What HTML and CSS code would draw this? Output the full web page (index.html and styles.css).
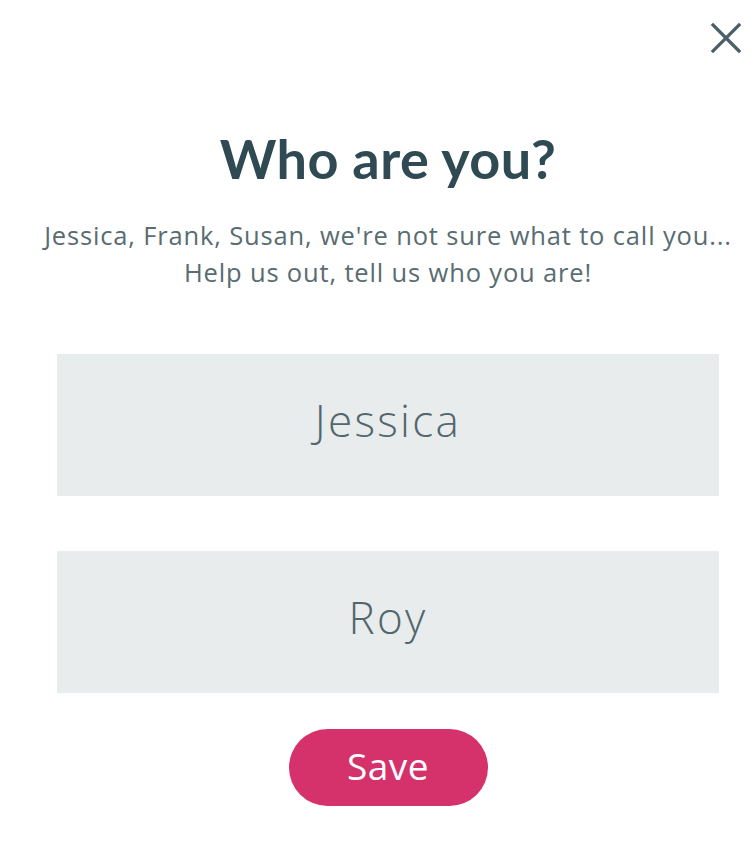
FILE: index.html
```html
<!DOCTYPE html>
<html>
<head>
<meta charset="utf-8">
<link rel="stylesheet" href="styles.css">
</head>
<body>
<div class="modal">
  <div class="topbar">
    <button class="close" aria-label="Close">
      <svg width="32" height="32" viewBox="0 0 32 32"><path d="M3 3 L29 29 M29 3 L3 29" stroke="#4b5f66" stroke-width="3.2" stroke-linecap="square" fill="none"/></svg>
    </button>
  </div>
  <div class="content">
    <h1 class="title">Who are you?</h1>
    <p class="subtitle">Jessica, Frank, Susan, we're not sure what to call you...<br>Help us out, tell us who you are!</p>
    <div class="fields">
      <input class="field" type="text" value="Jessica">
      <input class="field" type="text" value="Roy">
    </div>
    <div class="actions">
      <button class="save">Save</button>
    </div>
  </div>
</div>
</body>
</html>
```
FILE: styles.css
```css
* { box-sizing: border-box; }
html, body { margin: 0; padding: 0; background: #fff; }
body { font-family: "Open Sans", Lato, sans-serif; }
.modal { width: 756px; }
.topbar { display: flex; justify-content: flex-end; padding: 22px 14px 0 0; height: 56px; }
.close { background: none; border: 0; padding: 0; width: 32px; height: 32px; cursor: pointer; }
.close svg { display: block; }
.content { padding: 0 37px 0 57px; }
.title { margin: 70px 0 0; text-align: center; font-family: Lato, sans-serif; font-size: 54px; font-weight: 700; color: #2f4a52; line-height: 66px; letter-spacing: 0.4px; }
.subtitle { margin: 25px -40px 0; text-align: center; font-size: 25.5px; line-height: 37px; color: #586c72; font-weight: 400; letter-spacing: 0.85px; }
.fields { display: flex; flex-direction: column; gap: 55px; margin-top: 63px; }
.field { width: 100%; height: 142px; border: 0; padding: 0 0 11px; background: #e8ecec; text-align: center; font-family: inherit; font-size: 44px; font-weight: 300; letter-spacing: 2.3px; color: #52666c; outline: none; }
.actions { display: flex; justify-content: center; margin-top: 36px; }
.save { width: 199px; height: 77px; border: 0; padding: 0 0 5px; border-radius: 39px; background: #d5316b; color: #fff; font-family: inherit; font-size: 37px; font-weight: 400; letter-spacing: 0.5px; cursor: pointer; }
```
